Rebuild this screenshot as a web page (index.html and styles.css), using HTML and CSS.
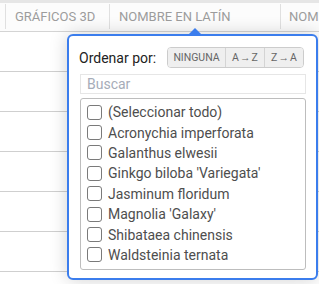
FILE: index.html
```html
<!DOCTYPE html>
<html>
<head>
    <meta charset="UTF-8">
    <title>Filtro de columna</title>
    <link rel="stylesheet" href="styles.css">
</head>
<body>
    <div class="topbar"></div>
    <div class="grid-header">
        <div class="col col-edge"></div>
        <div class="col col-3d">Gráficos 3D</div>
        <div class="col col-latin">Nombre en latín</div>
        <div class="col col-next">Nombre común</div>
    </div>
    <div class="grid-body">
        <div class="grid-row"></div>
        <div class="grid-row"></div>
        <div class="grid-row"></div>
        <div class="grid-row"></div>
        <div class="grid-row"></div>
        <div class="grid-row"></div>
    </div>

    <!-- filter popup for "Nombre en latín" -->
    <div class="popup">
        <span class="popup-arrow"></span>
        <div class="sort-row">
            <span class="sort-label">Ordenar por:</span>
            <div class="sort-buttons">
                <button class="sort-btn sort-none">NINGUNA</button>
                <button class="sort-btn">A&#8202;&rarr;&#8202;Z</button>
                <button class="sort-btn">Z&#8202;&rarr;&#8202;A</button>
            </div>
        </div>
        <input class="search" type="text" placeholder="Buscar">
        <ul class="value-list">
            <li><span class="box"></span>(Seleccionar todo)</li>
            <li><span class="box"></span>Acronychia imperforata</li>
            <li><span class="box"></span>Galanthus elwesii</li>
            <li><span class="box"></span>Ginkgo biloba 'Variegata'</li>
            <li><span class="box"></span>Jasminum floridum</li>
            <li><span class="box"></span>Magnolia 'Galaxy'</li>
            <li><span class="box"></span>Shibataea chinensis</li>
            <li><span class="box"></span>Waldsteinia ternata</li>
        </ul>
    </div>
</body>
</html>
```

FILE: styles.css
```css
body {
    margin: 0;
    font-family: Roboto, "Liberation Sans", sans-serif;
    background-color: #ffffff;
    overflow: hidden;
}

.topbar {
    height: 3px;
    background-color: #e6e6e6;
}

.grid-header {
    display: flex;
    height: 29px;
    box-sizing: border-box;
    border-bottom: 1px solid #d4d4d4;
    background-color: #fcfcfc;
    white-space: nowrap;
    overflow: hidden;
}

.col {
    flex-shrink: 0;
    display: flex;
    align-items: center;
    box-sizing: border-box;
    padding-left: 9px;
    font-size: 13px;
    color: #9c9c9c;
    text-transform: uppercase;
    border-right: 1px solid #e0e0e0;
    margin: 1px 0 2px;
}

.col-edge { width: 6px; padding: 0; }
.col-3d { width: 104px; }
.col-latin { width: 171px; }
.col-next { width: 140px; padding-left: 8px; border-right: none; }

.grid-row {
    height: 40px;
    box-sizing: border-box;
    border-bottom: 1px solid #cfcfcf;
}

.popup {
    position: absolute;
    left: 67px;
    top: 34px;
    width: 251px;
    height: 246px;
    box-sizing: border-box;
    border: 2px solid #3b7ded;
    border-radius: 6px;
    background-color: #ffffff;
    padding: 11px 10px 0 11px;
    box-shadow: 0 0 18px rgba(0, 0, 0, 0.18);
}

.popup-arrow {
    position: absolute;
    left: 120px;
    top: -8px;
    width: 0;
    height: 0;
    border-left: 6px solid transparent;
    border-right: 6px solid transparent;
    border-bottom: 6px solid #3b7ded;
}

.sort-row {
    display: flex;
    align-items: center;
    justify-content: space-between;
    height: 21px;
}

.sort-label {
    font-size: 14px;
    color: #222222;
    margin-left: -1px;
}

.sort-buttons {
    display: flex;
    height: 21px;
    border: 1px solid #cccccc;
    border-radius: 4px;
    overflow: hidden;
    box-sizing: border-box;
    margin-right: 2px;
}

.sort-btn {
    border: none;
    border-left: 1px solid #d4d4d4;
    background-color: #efefef;
    color: #666666;
    font-family: inherit;
    font-size: 10.5px;
    padding: 0;
    width: 39px;
}

.sort-none {
    border-left: none;
    width: 57px;
}

.search {
    display: block;
    width: 100%;
    height: 20px;
    box-sizing: border-box;
    margin: 6px 0 4px;
    border: 1px solid #e6e6e6;
    padding: 0 6px;
    font-family: inherit;
    font-size: 14px;
    outline: none;
}

.search::placeholder {
    color: #a6acb8;
}

.value-list {
    list-style: none;
    margin: 0;
    padding: 3px 0 0 6px;
    height: 172px;
    box-sizing: border-box;
    border: 1px solid #bdbdbd;
    border-radius: 3px;
}

.value-list li {
    display: flex;
    align-items: center;
    height: 20.4px;
    font-size: 14px;
    color: #4e4e4e;
    white-space: nowrap;
}

.box {
    width: 15px;
    height: 15px;
    box-sizing: border-box;
    border: 1.5px solid #7a7a7a;
    border-radius: 3px;
    margin-right: 6px;
}
```
